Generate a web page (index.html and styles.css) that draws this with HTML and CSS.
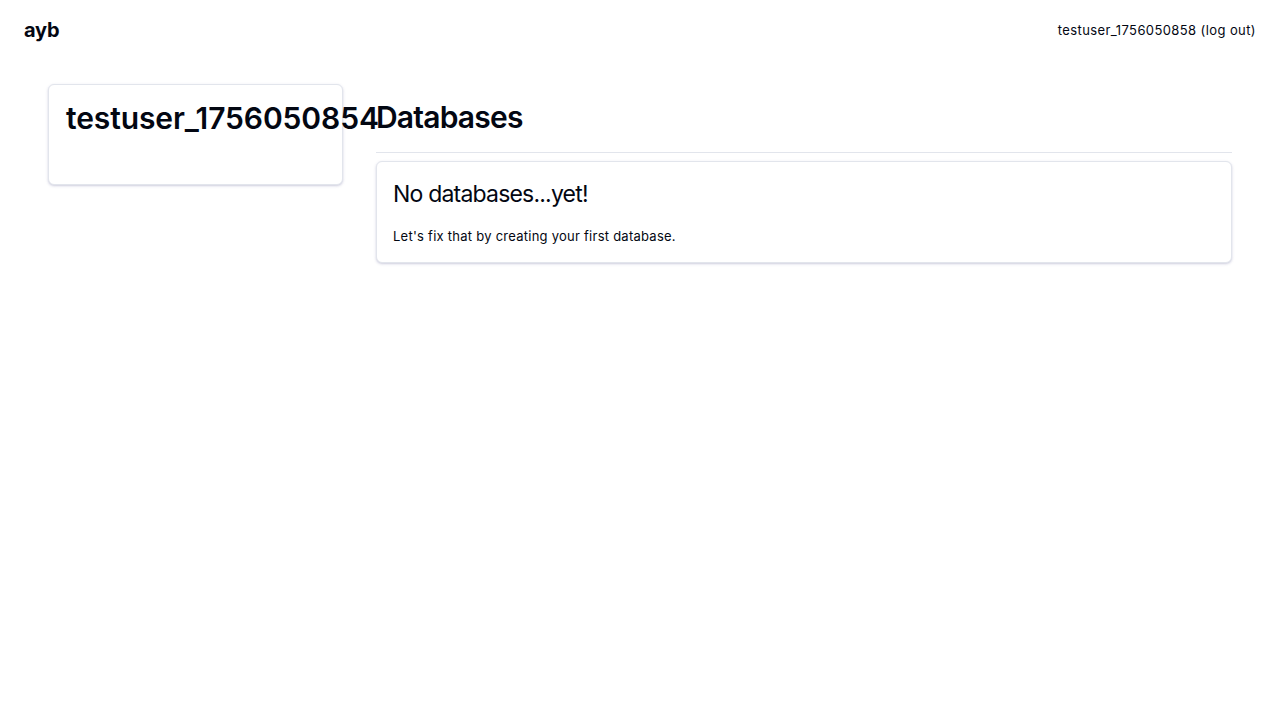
FILE: index.html
```html
<!DOCTYPE html>
<html>
<head>
<meta charset="utf-8">
<link rel="stylesheet" href="styles.css">
</head>
<body>
<header class="topbar">
  <div class="brand">ayb</div>
  <div class="account">testuser_1756050858 (log out)</div>
</header>
<main class="layout">
  <aside class="side">
    <div class="card profile">
      <h1 class="profile-name">testuser_1756050854</h1>
    </div>
  </aside>
  <section class="content">
    <h1 class="section-title">Databases</h1>
    <hr class="rule">
    <div class="card empty">
      <h2 class="empty-title">No databases...yet!</h2>
      <p class="empty-text">Let's fix that by creating your first database.</p>
    </div>
  </section>
</main>
</body>
</html>
```
FILE: styles.css
```css
* { box-sizing: border-box; }
body {
  margin: 0;
  font-family: Inter, "Noto Sans", sans-serif;
  color: #030712;
  background: #fff;
}
.topbar {
  height: 60px;
  display: flex;
  align-items: center;
  justify-content: space-between;
  padding: 0 24px;
}
.brand {
  font-size: 20px;
  font-weight: 700;
  letter-spacing: -0.2px;
}
.account {
  font-size: 13px;
  letter-spacing: 0.4px;
}
.layout {
  display: flex;
  padding: 24px 48px;
  gap: 33px;
}
.side {
  width: 295px;
  flex: none;
}
.content {
  flex: 1;
  padding-top: 15px;
}
.card {
  border: 1px solid #e2e5ec;
  border-radius: 6px;
  background: #fff;
  box-shadow: 0 1px 3px 0 rgba(70, 70, 130, 0.22), 0 1px 2px -1px rgba(70, 70, 130, 0.18);
  padding: 16px 17px;
}
.empty {
  padding: 16px;
}
.profile {
  height: 101px;
}
.profile-name {
  margin: 0;
  font-size: 30px;
  line-height: 34px;
  font-weight: 600;
  letter-spacing: -0.1px;
  white-space: nowrap;
}
.section-title {
  margin: 0;
  font-size: 30px;
  line-height: 36px;
  font-weight: 600;
  letter-spacing: -0.8px;
}
.rule {
  margin: 17px 0 8px;
  border: 0;
  border-top: 1px solid #e2e5ec;
}
.empty-title {
  margin: 0;
  font-size: 23px;
  line-height: 32px;
  font-weight: 400;
  letter-spacing: -0.8px;
}
.empty-text {
  margin: 16px 0 0;
  font-size: 13px;
  line-height: 20px;
  letter-spacing: 0.25px;
}
```
